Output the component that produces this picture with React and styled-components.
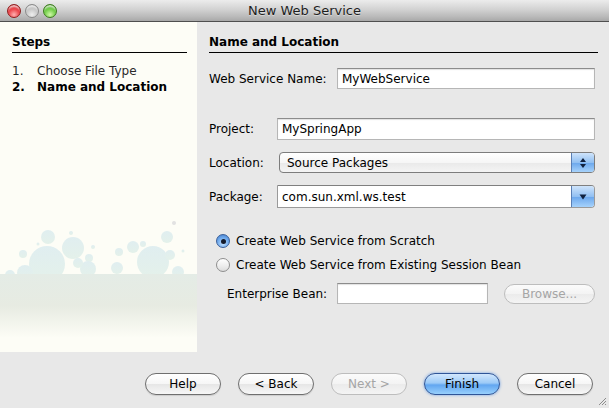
import styled, { createGlobalStyle, css } from "styled-components";

const GlobalStyle = createGlobalStyle`
  html, body {
    margin: 0;
    padding: 0;
    background: #e8e8e8;
  }
  body {
    font-family: "DejaVu Sans", "Liberation Sans", sans-serif;
    font-size: 12px;
    color: #000;
  }
`;

const Window = styled.div`
  position: relative;
  width: 609px;
  height: 408px;
  display: flex;
  flex-direction: column;
  background: #e8e8e8;
  overflow: hidden;
`;

const TitleBar = styled.div`
  height: 21px;
  flex: none;
  display: grid;
  grid-template-columns: 1fr auto 1fr;
  align-items: center;
  border-bottom: 1px solid #4f4f4f;
  background: linear-gradient(#ececec, #d2d2d2 45%, #b9b9b9 80%, #a8a8a8);
`;

const Lights = styled.div`
  display: flex;
  gap: 4px;
  padding-left: 7px;
`;

const Light = styled.span`
  width: 14px;
  height: 14px;
  border-radius: 50%;
  box-sizing: border-box;
  border: 1px solid ${(p) => p.$edge};
  background: radial-gradient(circle at 50% 80%, ${(p) => p.$glow} 0%, ${(p) => p.$base} 55%, ${(p) => p.$dark} 100%);
  box-shadow: inset 0 3px 2px -1px rgba(255, 255, 255, 0.75);
`;

const Title = styled.div`
  font-size: 13px;
  color: #1e1e1e;
  text-shadow: 0 1px 0 rgba(255, 255, 255, 0.4);
`;

const Main = styled.div`
  height: 330px;
  flex: none;
  display: flex;
`;

const StepsPanel = styled.div`
  width: 197px;
  flex: none;
  display: flex;
  flex-direction: column;
  background: #fdfdf6;
`;

const SectionHead = styled.div`
  padding: 13px 0 2px;
  font-weight: bold;
  font-size: 12px;
  line-height: 15px;
  border-bottom: 1px solid #000;
`;

const StepsInner = styled.div`
  padding: 0 10px 0 12px;
`;

const StepList = styled.ol`
  list-style: none;
  margin: 10px 0 0;
  padding: 0;
`;

const Step = styled.li`
  display: flex;
  line-height: 16px;
  color: ${(p) => (p.$current ? "#000" : "#2a2a2a")};
  font-weight: ${(p) => (p.$current ? "bold" : "normal")};
`;

const StepNum = styled.span`
  width: 25px;
`;

const Art = styled.svg`
  margin-top: auto;
  display: block;
`;

const Content = styled.div`
  flex: 1;
  padding: 0 11px 0 12px;
  display: flex;
  flex-direction: column;
`;

const Row = styled.div`
  display: grid;
  grid-template-columns: ${(p) => p.$label}px 1fr;
  align-items: center;
  margin-top: ${(p) => p.$top || 0}px;
  margin-right: 3px;
`;

const Grid = styled.div`
  display: grid;
  grid-template-columns: 68px 1fr;
  align-items: center;
  row-gap: 12px;
  margin: 29px 3px 0 0;
`;

const Label = styled.label`
  white-space: nowrap;
`;

const fieldBox = css`
  box-sizing: border-box;
  height: ${(p) => p.$h || 21}px;
  display: flex;
  align-items: center;
  padding: 0 4px;
  background: #fff;
  border: 1px solid #b6b6b6;
  border-top-color: #8c8c8c;
  box-shadow: inset 0 1px 1px rgba(0, 0, 0, 0.12);
`;

const Field = styled.div`
  ${fieldBox}
`;

const Select = styled.div`
  box-sizing: border-box;
  height: 21px;
  margin-left: 2px;
  display: flex;
  align-items: center;
  border: 1px solid #7d7d7d;
  border-radius: 4px;
  background: linear-gradient(#ffffff, #f6f6f6 50%, #e9e9e9 51%, #f4f4f4);
  overflow: hidden;
`;

const SelectText = styled.span`
  flex: 1;
  padding-left: 7px;
`;

const BlueKnob = styled.span`
  align-self: stretch;
  width: 22px;
  display: flex;
  align-items: center;
  justify-content: center;
  border-left: 1px solid #5a7fb5;
  background: linear-gradient(#cfe4fb, #92c0f2 50%, #6aa6ec 51%, #a6d2fb);
`;

const Combo = styled.div`
  box-sizing: border-box;
  height: 23px;
  display: flex;
  align-items: stretch;
  background: #fff;
  border: 1px solid #9a9a9a;
  border-top-color: #7f7f7f;
  border-radius: 0 4px 4px 0;
  overflow: hidden;
`;

const ComboText = styled.span`
  flex: 1;
  display: flex;
  align-items: center;
  padding-left: 4px;
`;

const Options = styled.div`
  display: flex;
  flex-direction: column;
  gap: 8px;
  margin-top: 25px;
  padding-left: 7px;
`;

const Option = styled.div`
  display: flex;
  align-items: center;
  gap: 6px;
  height: 16px;
`;

const Radio = styled.span`
  box-sizing: border-box;
  width: 14px;
  height: 14px;
  border-radius: 50%;
  display: flex;
  align-items: center;
  justify-content: center;
  border: 1px solid ${(p) => (p.$checked ? "#3a5f98" : "#8e8e8e")};
  background: ${(p) =>
    p.$checked
      ? "radial-gradient(circle at 50% 70%, #c5e2ff 0%, #6ea9ec 55%, #3f78c8 100%)"
      : "linear-gradient(#ffffff, #ececec 60%, #dcdcdc)"};

  &::after {
    content: "";
    width: 5px;
    height: 5px;
    border-radius: 50%;
    background: #141a2a;
    display: ${(p) => (p.$checked ? "block" : "none")};
  }
`;

const BeanRow = styled.div`
  display: flex;
  align-items: center;
  margin: 10px 3px 0 18px;
`;

const BeanLabel = styled.label`
  width: 110px;
`;

const BeanField = styled.div`
  ${fieldBox}
  width: 151px;
`;

const Button = styled.button`
  box-sizing: border-box;
  width: ${(p) => p.$w || 76}px;
  height: ${(p) => p.$h || 22}px;
  padding: 0;
  border-radius: 11px;
  font-family: "DejaVu Sans", "Liberation Sans", sans-serif;
  font-size: 12px;
  color: #000;
  border: 1px solid #6f6f6f;
  background: linear-gradient(#ffffff, #f6f6f6 50%, #e6e6e6 51%, #f7f7f7);
  box-shadow: 0 1px 1px rgba(0, 0, 0, 0.12);

  &:disabled {
    color: #a5a5a5;
    border-color: #bdbdbd;
    background: linear-gradient(#fbfbfb, #f3f3f3 50%, #ebebeb 51%, #f4f4f4);
    box-shadow: none;
  }

  ${(p) =>
    p.$primary &&
    css`
      border-color: #2f5597;
      background: linear-gradient(#d2e7fd, #9ccaf7 45%, #62a6f0 55%, #98d0fd);
      box-shadow: 0 0 3px #6f9fe2;
    `}
`;

const BrowseButton = styled(Button)`
  margin-left: 16px;
  border-radius: 10px;
`;

const Footer = styled.div`
  flex: 1;
  display: flex;
  justify-content: flex-end;
  align-items: flex-start;
  gap: 17px;
  padding: 21px 16px 0 0;
`;

const Grip = styled.svg`
  position: absolute;
  right: 2px;
  bottom: 2px;
`;

function SpinArrows() {
  return (
    <svg width="8" height="12" viewBox="0 0 8 12">
      <path d="M4 1 L7 5 L1 5 Z" fill="#10213f" />
      <path d="M4 11 L7 7 L1 7 Z" fill="#10213f" />
    </svg>
  );
}

function DownArrow() {
  return (
    <svg width="8" height="6" viewBox="0 0 8 6">
      <path d="M0.5 0.5 L7.5 0.5 L4 5.5 Z" fill="#10213f" />
    </svg>
  );
}

const bubbles = [
  [48, 25, 7], [73, 36, 11], [47, 52, 18], [71, 21, 2], [23, 42, 4],
  [89, 46, 4], [93, 35, 2], [38, 32, 1.5], [133, 35, 6], [143, 32, 3],
  [119, 40, 4], [167, 25, 6], [153, 50, 16], [170, 43, 5], [183, 39, 1.5],
  [117, 56, 6], [88, 57, 8], [78, 51, 5], [25, 61, 8], [10, 63, 5],
  [178, 60, 6],
];

function BubbleArt() {
  return (
    <Art width="197" height="140" viewBox="0 0 197 140">
      <defs>
        <linearGradient id="band" x1="0" y1="0" x2="0" y2="1">
          <stop offset="0" stopColor="#e4ece6" />
          <stop offset="0.5" stopColor="#e7ebe2" />
          <stop offset="1" stopColor="#fdfdf6" />
        </linearGradient>
        <linearGradient id="bub" x1="0" y1="0" x2="0" y2="1">
          <stop offset="0" stopColor="#e0eef0" />
          <stop offset="1" stopColor="#e4f1ea" />
        </linearGradient>
        <filter id="soft" x="-5%" y="-5%" width="110%" height="110%">
          <feGaussianBlur stdDeviation="0.6" />
        </filter>
      </defs>
      <g filter="url(#soft)">
        {bubbles.map(([cx, cy, r], i) => (
          <circle key={i} cx={cx} cy={cy} r={r} fill="url(#bub)" />
        ))}
        <circle cx="174" cy="11" r="2" fill="#e2e2e2" />
      </g>
      <rect x="0" y="62" width="197" height="64" fill="url(#band)" />
    </Art>
  );
}

export default function App() {
  return (
    <>
      <GlobalStyle />
      <Window>
        <TitleBar>
          <Lights>
            <Light $edge="#8f1d1d" $base="#e8363c" $glow="#ffb0b0" $dark="#b01a20" />
            <Light $edge="#8a8a8a" $base="#c4c4c4" $glow="#eeeeee" $dark="#a0a0a0" />
            <Light $edge="#3c7a1e" $base="#66c83c" $glow="#d0f8a8" $dark="#3f8f1f" />
          </Lights>
          <Title>New Web Service</Title>
          <div />
        </TitleBar>

        <Main>
          <StepsPanel>
            <StepsInner>
              <SectionHead>Steps</SectionHead>
              <StepList>
                <Step>
                  <StepNum>1.</StepNum>Choose File Type
                </Step>
                <Step $current>
                  <StepNum>2.</StepNum>Name and Location
                </Step>
              </StepList>
            </StepsInner>
            <BubbleArt />
          </StepsPanel>

          <Content>
            <SectionHead>Name and Location</SectionHead>

            <Row $label={128} $top={15}>
              <Label>Web Service Name:</Label>
              <Field>MyWebService</Field>
            </Row>

            <Grid>
              <Label>Project:</Label>
              <Field $h={22}>MySpringApp</Field>
              <Label>Location:</Label>
              <Select>
                <SelectText>Source Packages</SelectText>
                <BlueKnob>
                  <SpinArrows />
                </BlueKnob>
              </Select>
              <Label>Package:</Label>
              <Combo>
                <ComboText>com.sun.xml.ws.test</ComboText>
                <BlueKnob>
                  <DownArrow />
                </BlueKnob>
              </Combo>
            </Grid>

            <Options>
              <Option>
                <Radio $checked />
                Create Web Service from Scratch
              </Option>
              <Option>
                <Radio />
                Create Web Service from Existing Session Bean
              </Option>
            </Options>

            <BeanRow>
              <BeanLabel>Enterprise Bean:</BeanLabel>
              <BeanField />
              <BrowseButton $w={91} $h={20} disabled>
                Browse...
              </BrowseButton>
            </BeanRow>
          </Content>
        </Main>

        <Footer>
          <Button>Help</Button>
          <Button>&lt; Back</Button>
          <Button disabled>Next &gt;</Button>
          <Button $primary>Finish</Button>
          <Button>Cancel</Button>
        </Footer>

        <Grip width="10" height="10" viewBox="0 0 10 10">
          <path d="M9 2 L2 9 M9 5 L5 9 M9 8 L8 9" stroke="#8c8c8c" strokeWidth="1" />
        </Grip>
      </Window>
    </>
  );
}
